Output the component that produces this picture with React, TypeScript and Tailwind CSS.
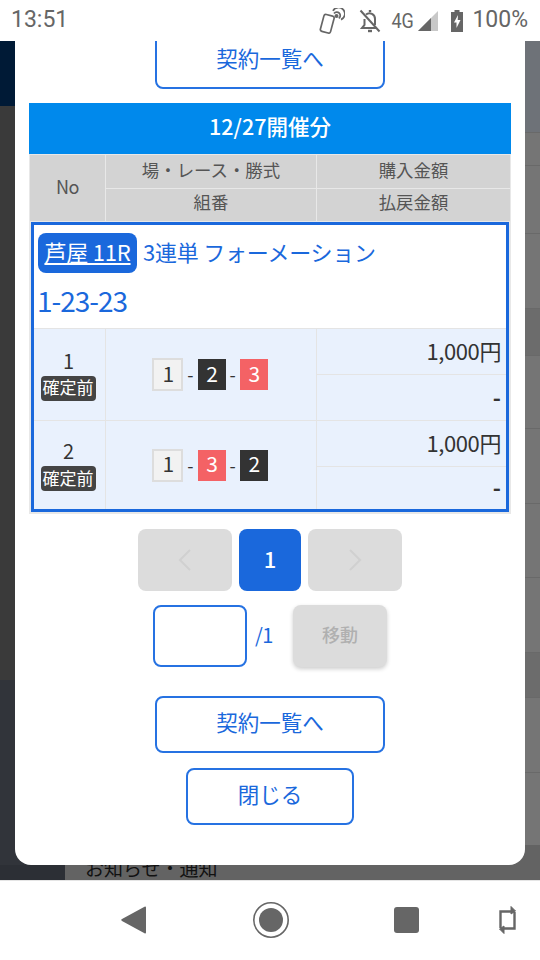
import React from "react";

const font = { fontFamily: '"Noto Sans CJK JP", "Noto Sans", sans-serif' };

// rows of the page behind the dialog, seen on its right edge
const backRows = [
  { h: "h-[33px]", c: "bg-[#757575]" },
  { h: "h-[68px]", c: "bg-[#757575]" },
  { h: "h-[75px]", c: "bg-[#757575]" },
  { h: "h-[47px]", c: "bg-[#6c6c6c]" },
  { h: "h-[73px]", c: "bg-[#757575]" },
  { h: "h-[75px]", c: "bg-[#757575]" },
  { h: "h-[74px]", c: "bg-[#757575]" },
  { h: "h-[75px]", c: "bg-[#757575]" },
  { h: "h-[45px]", c: "bg-[#6c6c6c]" },
  { h: "h-[75px]", c: "bg-[#757575]" },
  { h: "h-[73px]", c: "bg-[#757575]" },
];

const Box = ({ n }: { n: number }) => {
  if (n === 1) {
    return <span className="flex h-[33px] w-[31px] items-center justify-center border-2 border-[#dddddd] bg-[#f2f2f2] pb-[2px] text-[21px] tracking-[-1px] text-[#333]">1</span>;
  }
  if (n === 2) {
    return <span className="flex h-[31px] w-[28px] items-center justify-center bg-[#333333] pb-[2px] text-[21px] tracking-[-1px] text-white">2</span>;
  }
  return <span className="flex h-[31px] w-[28px] items-center justify-center bg-[#f46265] pb-[2px] text-[21px] tracking-[-1px] text-white">3</span>;
};

const Row = ({ no, boxes, h, last }: { no: number; boxes: number[]; h: string; last?: boolean }) => (
  <div className={`grid grid-cols-[72px_211px_1fr] bg-[#e9f1fd] ${h} ${last ? "" : "border-b border-[#e4e4e4]"}`}>
    <div className="flex flex-col items-center justify-center gap-[1px] border-r border-[#e4e4e4] pr-[3px] pt-[2px] text-[20px] text-[#333]">
      <span className="h-[24px] pb-[2px] leading-[20px] tracking-[-1px]">{no}</span>
      <span className="flex h-[25px] w-[55px] items-center justify-center rounded-[4px] bg-[#444444] pb-[2px] text-[17px] leading-[20px] text-white">確定前</span>
    </div>
    <div className="flex items-center justify-center gap-[4px] border-r border-[#e4e4e4] pr-[2px] text-[18px] text-[#333]">
      <Box n={boxes[0]} />
      <span>-</span>
      <Box n={boxes[1]} />
      <span>-</span>
      <Box n={boxes[2]} />
    </div>
    <div className="grid grid-rows-[46px_1fr] text-[22px] text-[#333]">
      <div className="flex items-center justify-end border-b border-[#e4e4e4] pb-[3px] pr-[5px] tracking-[-0.4px]">1,000円</div>
      <div className="flex items-center justify-end pb-[3px] pr-[5px] font-bold">-</div>
    </div>
  </div>
);

const OutlineButton = ({ label, w }: { label: string; w: string }) => (
  <button className={`flex h-[57px] ${w} items-center justify-center rounded-[8px] border-2 border-[#2672e2] bg-white pb-[4px] text-[21.5px] text-[#1a68dc]`}>
    {label}
  </button>
);

export default function App() {
  return (
    <div className="flex h-[960px] w-[540px] flex-col overflow-hidden bg-white" style={font}>
      {/* status bar */}
      <div className="flex h-[41px] items-center bg-white pl-[11px] pr-[12px] text-[#666666]" style={{ fontFamily: "Roboto, sans-serif" }}>
        <span className="text-[23px]">13:51</span>
        <div className="ml-auto flex items-center">
          <svg width="27" height="26" viewBox="0 0 27 26" fill="none" stroke="#666" strokeWidth="1.7">
            <rect x="4" y="7" width="10.5" height="17.5" rx="2" transform="rotate(15 9.25 15.75)" />
            <circle cx="18.5" cy="8" r="2" fill="#666" stroke="none" />
            <path d="M15 2.8a6.3 6.3 0 1 1 8 8.8" />
            <path d="M16 5.4a3.5 3.5 0 1 1 4.8 5" />
          </svg>
          <svg className="ml-[13px]" width="24" height="26" viewBox="0 0 24 26" fill="none" stroke="#666" strokeWidth="2">
            <path d="M8 6.5a5.5 5.5 0 0 1 9 4.5v6" />
            <path d="M6.5 11v6L4 20h15" />
            <path d="M10 23h4" strokeWidth="2.4" />
            <path d="M12 2v2" strokeWidth="2.4" />
            <path d="M2.5 2.5l19 21" />
          </svg>
          <span className="ml-[10px] scale-y-[1.1] text-[18px] tracking-[-0.3px]">4G</span>
          <svg className="ml-[4px]" width="21" height="21" viewBox="0 0 21 21">
            <path d="M21 1v20H1z" fill="#c8c8c8" />
            <path d="M14 8v13H1z" fill="#666" />
          </svg>
          <svg className="ml-[13px]" width="12" height="22" viewBox="0 0 12 22">
            <path d="M3.5 0h5v2H12v20H0V2h3.5z" fill="#666" />
            <path d="M7 5L3 12.5h2.5V18l4-8H6.7z" fill="#fff" />
          </svg>
          <span className="ml-[9px] text-[23px]">100%</span>
        </div>
      </div>

      {/* page behind the dialog */}
      <div className="relative flex h-[839px] bg-[#757575]">
        <div className="flex w-[65px] flex-col">
          <div className="h-[65px] bg-[#001a36]" />
          <div className="h-[574px] bg-[#3a3a3a]" />
          <div className="h-[185px] bg-[#31343a]" />
          <div className="flex-1 bg-[#2c2f35]" />
        </div>
        <div className="flex flex-1 flex-col">
          <div className="h-[91px] bg-[#6e7278]" />
          {backRows.map((r, i) => (
            <div key={i} className={`${r.h} ${r.c} border-t border-[#696969]`} />
          ))}
          <div className="flex min-h-0 flex-1 items-end overflow-hidden bg-[#636363] pl-[20px]">
            <span className="mb-[1px] whitespace-nowrap text-[19px] leading-[22px] text-[#111]">お知らせ・通知</span>
          </div>
        </div>

        {/* dialog */}
        <div className="absolute inset-x-[15px] top-0 bottom-[15px] flex flex-col items-center overflow-hidden rounded-b-[16px] bg-white">
          <div className="mt-[-9px]">
            <OutlineButton label="契約一覧へ" w="w-[230px]" />
          </div>

          <div className="mt-[14px] w-[482px]">
            <div className="flex h-[51px] items-center justify-center bg-[#0089ec] pb-[4px] text-[21.5px] font-medium text-white">12/27開催分</div>
            <div className="grid h-[68px] grid-cols-[75px_210px_1fr] grid-rows-2 gap-[1px] border border-[#e8e8e8] bg-[#e8e8e8] text-[17.4px] text-[#555555]">
              <div className="row-span-2 flex items-center justify-center bg-[#d3d3d3] pb-[3px] text-[18px] tracking-[-0.5px]">No</div>
              <div className="flex items-center justify-center bg-[#d3d3d3] pb-[3px]">場・レース・勝式</div>
              <div className="flex items-center justify-center bg-[#d3d3d3] pb-[3px]">購入金額</div>
              <div className="flex items-center justify-center bg-[#d3d3d3] pb-[6px]">組番</div>
              <div className="flex items-center justify-center bg-[#d3d3d3] pb-[6px]">払戻金額</div>
            </div>
            <div className="border-2 border-t-0 border-[#e8e8e8]">
              <div className="border-[3px] border-[#1a68dc]">
                <div className="h-[104px] border-b border-[#e4e4e4] bg-white pl-[4px] pt-[8px]">
                  <div className="flex items-center">
                    <span className="flex h-[40px] w-[99px] items-center justify-center rounded-[8px] bg-[#1a68dc] pb-[3px] text-[22px] tracking-[-0.2px] text-white underline">芦屋 11R</span>
                    <span className="ml-[6px] pb-[3px] text-[22px] tracking-[-0.25px] text-[#1a68dc]">3連単 フォーメーション</span>
                  </div>
                  <div className="ml-[-1px] mt-[6px] text-[28px] leading-[42px] tracking-[-1px] text-[#1a68dc]">1-23-23</div>
                </div>
                <Row no={1} boxes={[1, 2, 3]} h="h-[92px]" />
                <Row no={2} boxes={[1, 3, 2]} h="h-[88px]" last />
              </div>
            </div>
          </div>

          {/* pager */}
          <div className="mt-[15px] flex gap-[7px]">
            <div className="flex h-[62px] w-[94px] items-center justify-center rounded-[8px] bg-[#dcdcdc]">
              <svg width="16" height="24" viewBox="0 0 16 24" fill="none" stroke="#d0d0d0" strokeWidth="2"><path d="M13 2L3 12l10 10" /></svg>
            </div>
            <div className="flex h-[62px] w-[62px] items-center justify-center rounded-[8px] bg-[#1a68dc] pb-[3px] text-[22px] font-medium text-white">1</div>
            <div className="flex h-[62px] w-[94px] items-center justify-center rounded-[8px] bg-[#dcdcdc]">
              <svg width="16" height="24" viewBox="0 0 16 24" fill="none" stroke="#d0d0d0" strokeWidth="2"><path d="M3 2l10 10L3 22" /></svg>
            </div>
          </div>

          <div className="mt-[14px] flex h-[62px] items-center">
            <div className="h-[62px] w-[94px] rounded-[8px] border-2 border-[#2672e2] bg-white" />
            <span className="ml-[8px] w-[38px] pb-[3px] text-[20px] tracking-[-0.5px] text-[#1a68dc]">/1</span>
            <div className="flex h-[62px] w-[94px] items-center justify-center rounded-[8px] bg-[#dcdcdc] pb-[4px] text-[18px] font-medium text-[#b0b0b0] shadow-[0_2px_4px_rgba(0,0,0,0.2)]">移動</div>
          </div>

          <div className="mt-[29px]">
            <OutlineButton label="契約一覧へ" w="w-[230px]" />
          </div>
          <div className="mt-[15px]">
            <OutlineButton label="閉じる" w="w-[168px]" />
          </div>
        </div>
      </div>

      {/* nav bar */}
      <div className="flex h-[80px] items-center border-t border-[#e5e5e5] bg-white pb-[1px] pl-[121px]">
        <svg width="25" height="28" viewBox="0 0 25 28"><path d="M25 1.5v25a1 1 0 0 1-1.5.8L1 15a1 1 0 0 1 0-1.9L23.500.7A1 1 0 0 1 25 1.500z" fill="#666" /></svg>
        <svg className="ml-[106px]" width="38" height="38" viewBox="0 0 38 38">
          <circle cx="19" cy="19" r="17.2" fill="none" stroke="#666" strokeWidth="1.6" />
          <circle cx="19" cy="19" r="12" fill="#666" />
        </svg>
        <div className="ml-[104px] h-[26px] w-[25px] rounded-[3px] bg-[#666666]" />
        <svg className="ml-[80px]" width="17" height="30" viewBox="0 0 17 30" fill="none" stroke="#666" strokeWidth="2.4">
          <path d="M1.500 23V6.500h12" />
          <path d="M15.500 7v16.500H4" />
          <path d="M12 1.500l4.500 4.500L12 9z" fill="#666" strokeWidth="1" />
          <path d="M5 28.500L.5 24 5 21z" fill="#666" strokeWidth="1" />
        </svg>
      </div>
    </div>
  );
}
